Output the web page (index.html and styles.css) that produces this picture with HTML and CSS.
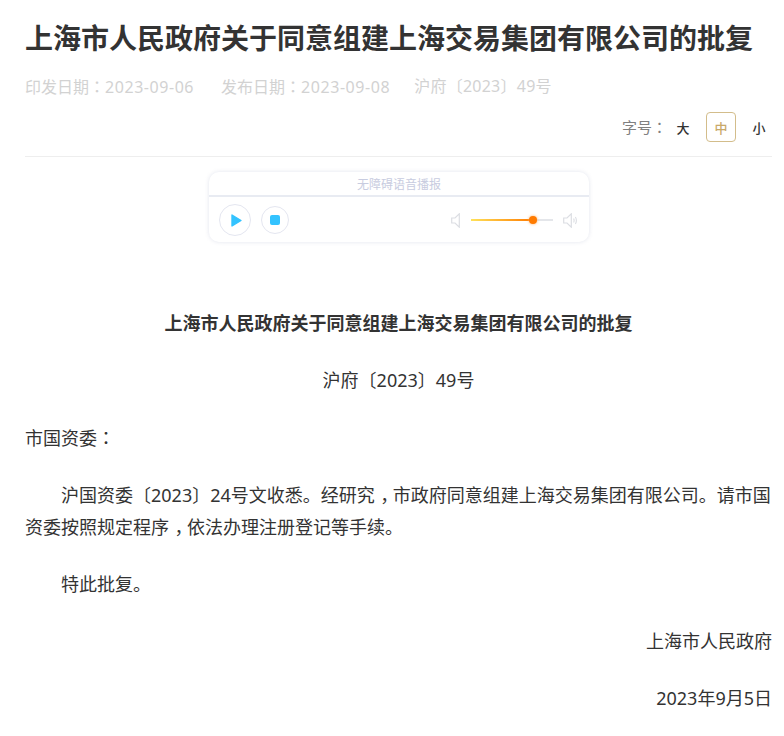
FILE: index.html
```html
<!DOCTYPE html>
<html lang="zh-CN">
<head>
<meta charset="utf-8">
<title>上海市人民政府关于同意组建上海交易集团有限公司的批复</title>
<link rel="stylesheet" href="styles.css">
</head>
<body>
<main class="page">
  <h1 class="title">上海市人民政府关于同意组建上海交易集团有限公司的批复</h1>
  <div class="meta">
    <span class="meta-first">印发日期<span class="colon">：</span><span class="date">2023-09-06</span></span>
    <span>发布日期<span class="colon">：</span><span class="date">2023-09-08</span></span>
    <span class="meta-ref">沪府〔2023〕49号</span>
  </div>
  <div class="fontsize">
    <span class="fs-label">字号<span class="colon">：</span></span>
    <span class="fs-opt">大</span>
    <span class="fs-opt active">中</span>
    <span class="fs-opt">小</span>
  </div>
  <section class="player">
    <div class="player-title">无障碍语音播报</div>
    <div class="player-controls">
      <span class="btn btn-play">
        <svg width="11" height="13" viewBox="0 0 11 13"><path d="M1 1 L10 6.5 L1 12 Z" fill="#33c3ff" stroke="#33c3ff" stroke-width="1.4" stroke-linejoin="round"/></svg>
      </span>
      <span class="btn btn-stop"><i class="stop-square"></i></span>
      <div class="volume">
        <svg width="9" height="15" viewBox="0 0 9 15"><path d="M.7 5 H4 L8.3 .8 V14.2 L4 10 H.7 Z" fill="none" stroke="#dcdee3" stroke-width="1.2"/></svg>
        <div class="slider"><div class="slider-fill"><i class="slider-knob"></i></div></div>
        <svg width="15" height="15" viewBox="0 0 15 15"><path d="M.7 5 H4 L8.3 .8 V14.2 L4 10 H.7 Z" fill="none" stroke="#dcdee3" stroke-width="1.2"/><path d="M10.6 5.5 Q11.6 7.5 10.6 9.5 M12.4 4 Q14.4 7.5 12.4 11" fill="none" stroke="#dcdee3" stroke-width="1.1"/></svg>
      </div>
    </div>
  </section>
  <article class="body">
    <p class="center strong">上海市人民政府关于同意组建上海交易集团有限公司的批复</p>
    <p class="center">沪府〔2023〕49号</p>
    <p>市国资委<span class="colon">：</span></p>
    <p class="indent">沪国资委〔2023〕24号文收悉。经研究<span class="comma">，</span>市政府同意组建上海交易集团有限公司。请市国<br>资委按照规定程序<span class="comma">，</span>依法办理注册登记等手续。</p>
    <p class="indent">特此批复。</p>
    <p class="right">上海市人民政府</p>
    <p class="right">2023年9月5日</p>
  </article>
</main>
</body>
</html>
```
FILE: styles.css
```css
* { box-sizing: border-box; }
html, body { margin: 0; padding: 0; background: #fff; }
body {
  font-family: "Noto Sans", "Noto Sans CJK SC", sans-serif;
  color: #333;
  overflow: hidden;
}
.page { width: 784px; height: 736px; padding: 17px 12px 0 25px; overflow: hidden; }
.title { margin: 0; font-size: 28px; line-height: 42px; font-weight: 700; color: #333; white-space: nowrap; }
.colon { font-family: "Noto Sans CJK JP", sans-serif; font-feature-settings: "locl" 0; }
.comma { padding-left: .3em; letter-spacing: -.3em; }
.date { letter-spacing: .55px; }
.meta { display: flex; gap: 24px; margin-top: 15px; font-size: 16px; line-height: 24px; color: #d2d2d2; }
.meta-first { margin-right: 3px; }
.meta-ref { letter-spacing: .25px; }
.fontsize {
  display: flex; justify-content: flex-end; align-items: flex-start; gap: 8px;
  margin-top: 13px; padding-bottom: 14px;
  border-bottom: 1px solid #eee;
}
.fs-label { margin-right: -7px; font-size: 15px; line-height: 30px; color: #808080; }
.fs-opt { display: flex; align-items: center; justify-content: center; width: 30px; height: 30px; font-size: 13px; font-weight: 500; color: #333; border: 1px solid transparent; border-radius: 4px; }
.fs-opt:last-child { margin-right: -2px; }
.fs-opt.active { color: #c9a96a; border-color: #d3bd8b; }
.player {
  width: 380px; height: 70px; margin: 15px 0 0 184px;
  border-radius: 10px; background: #fff;
  box-shadow: 0 0 4px rgba(190, 195, 215, .45);
}
.player-title { height: 25px; line-height: 26px; text-align: center; font-size: 12px; color: #c8cce0; border-bottom: 2px solid #e8ebf2; }
.player-controls { display: flex; align-items: center; height: 45px; padding: 1px 11px 0 10px; }
.btn { display: flex; align-items: center; justify-content: center; border: 1px solid #e4e6f0; border-radius: 50%; }
.btn-play { width: 32px; height: 32px; padding-left: 3px; }
.btn-stop { width: 28px; height: 28px; margin-left: 10px; }
.stop-square { display: block; width: 10px; height: 10px; border-radius: 2px; background: #33c3ff; }
.volume { display: flex; align-items: center; margin-left: auto; }
.slider { width: 82px; height: 2px; margin: 0 10px 0 11px; background: #e4e6ea; }
.slider-fill { position: relative; width: 62px; height: 2px; background: linear-gradient(90deg, #ffe25a, #ff7b00); }
.slider-knob { position: absolute; right: -4px; top: -3px; width: 8px; height: 8px; border-radius: 50%; background: #ff7b00; box-shadow: 0 0 3px #ffb066; }
.body { margin-top: 65px; width: 747px; font-size: 18px; line-height: 32px; color: #333; }
.body p { margin: 0 0 25px; }
.center { text-align: center; }
.strong { font-weight: 700; }
.indent { text-indent: 36px; }
.right { text-align: right; }
```
